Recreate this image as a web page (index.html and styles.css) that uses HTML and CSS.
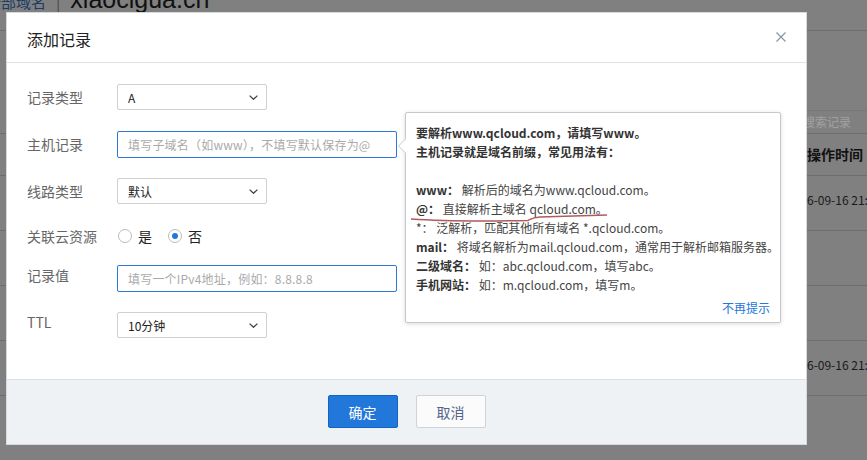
FILE: index.html
```html
<!DOCTYPE html>
<html lang="zh-CN">
<head>
    <meta charset="UTF-8">
    <meta name="viewport" content="width=device-width, initial-scale=1.0">
    <title>添加记录</title>
    <link rel="stylesheet" href="styles.css">
</head>
<body>

<div class="backdrop">
    <div class="crumb">
        <div class="crumb-inner">
            <span class="crumb-link">全部域名</span>
            <span class="crumb-sep">|</span>
            <span class="crumb-domain">xiaocigua.cn</span>
        </div>
    </div>
    <div class="page-body">
        <div class="side">
            <div class="side-label">记</div>
            <div class="side-line"></div>
            <div class="side-active">+</div>
            <div class="side-row"></div>
            <div class="side-row"></div>
            <div class="side-row"></div>
            <div class="side-row"></div>
            <div class="side-row"></div>
            <div class="side-row"></div>
        </div>
        <div class="page-main">
            <div class="search-area">
                <div class="search-box">搜索记录</div>
            </div>
            <div class="grid-head">最后操作时间</div>
            <div class="grid-row">2016-09-16 21:30:12</div>
            <div class="grid-row"></div>
            <div class="grid-row"></div>
            <div class="grid-row">2016-09-16 21:28:45</div>
        </div>
    </div>
</div>

<div class="modal">
    <div class="modal-head">
        <h3 class="modal-title">添加记录</h3>
        <span class="modal-close">
            <svg width="10" height="10" viewBox="0 0 10 10"><path d="M0.5 0.5L9.5 9.5M9.5 0.5L0.5 9.5" stroke="#8b97a8" stroke-width="1.3" fill="none"/></svg>
        </span>
    </div>

    <div class="modal-body">
        <div class="form-row">
            <label class="form-label">记录类型</label>
            <div class="select">
                <span>A</span>
                <svg width="9" height="5" viewBox="0 0 9 5"><path d="M0.6 0.6L4.5 4.3L8.4 0.6" stroke="#444" stroke-width="1.3" fill="none"/></svg>
            </div>
        </div>
        <div class="form-row">
            <label class="form-label">主机记录</label>
            <div class="input">填写子域名（如www），不填写默认保存为@</div>
        </div>
        <div class="form-row">
            <label class="form-label">线路类型</label>
            <div class="select">
                <span>默认</span>
                <svg width="9" height="5" viewBox="0 0 9 5"><path d="M0.6 0.6L4.5 4.3L8.4 0.6" stroke="#444" stroke-width="1.3" fill="none"/></svg>
            </div>
        </div>
        <div class="form-row form-row-radio">
            <label class="form-label">关联云资源</label>
            <span class="radio"></span><span class="radio-text">是</span>
            <span class="radio radio-on"></span><span class="radio-text">否</span>
        </div>
        <div class="form-row">
            <label class="form-label label-high">记录值</label>
            <div class="input">填写一个IPv4地址，例如：8.8.8.8</div>
        </div>
        <div class="form-row">
            <label class="form-label label-high">TTL</label>
            <div class="select">
                <span>10分钟</span>
                <svg width="9" height="5" viewBox="0 0 9 5"><path d="M0.6 0.6L4.5 4.3L8.4 0.6" stroke="#444" stroke-width="1.3" fill="none"/></svg>
            </div>
        </div>
    </div>

    <div class="modal-foot">
        <button class="btn btn-primary">确定</button>
        <button class="btn">取消</button>
    </div>

    <div class="tip">
        <p class="tip-strong">要解析www.qcloud.com，请填写www。</p>
        <p class="tip-strong">主机记录就是域名前缀，常见用法有：</p>
        <p>&nbsp;</p>
        <p><b>www：</b> 解析后的域名为www.qcloud.com。</p>
        <p><b>@：</b> 直接解析主域名 qcloud.com。</p>
        <p>*： 泛解析，匹配其他所有域名 *.qcloud.com。</p>
        <p><b>mail：</b> 将域名解析为mail.qcloud.com，通常用于解析邮箱服务器。</p>
        <p><b>二级域名：</b> 如：abc.qcloud.com，填写abc。</p>
        <p><b>手机网站：</b> 如：m.qcloud.com，填写m。</p>
        <a class="tip-close" href="#">不再提示</a>
        <svg class="tip-mark" width="374" height="209" viewBox="0 0 374 209"><path d="M5 106C34 108 94 108 122 107.5C125 106 126 104.5 134 104L201 102" stroke="#b05a5a" stroke-width="1.4" fill="none"/></svg>
    </div>
</div>

</body>
</html>
```

FILE: styles.css
```css
* {
    box-sizing: border-box;
}

body {
    margin: 0;
    width: 867px;
    height: 460px;
    overflow: hidden;
    position: relative;
    background: #808080;
    font-family: "Noto Sans CJK SC", sans-serif;
    color: #333;
}

/* dimmed page behind the dialog */
.backdrop {
    height: 460px;
    display: flex;
    flex-direction: column;
}

.crumb {
    height: 31px;
    border-bottom: 1px solid #6e6e6e;
    overflow: hidden;
}

.crumb-inner {
    display: flex;
    align-items: baseline;
    gap: 10px;
    margin-top: -13px;
    margin-left: -14px;
    line-height: 24px;
}

.crumb-link {
    font-size: 15px;
    color: #1b3c66;
}

.crumb-sep {
    font-size: 16px;
    color: #4a4a4a;
}

.crumb-domain {
    font-family: "Liberation Sans", sans-serif;
    font-size: 25px;
    color: #111;
}

.page-body {
    flex: 1;
    display: flex;
}

.side {
    width: 6px;
    overflow: hidden;
    display: flex;
    flex-direction: column;
}

.side-label {
    height: 43px;
    padding-top: 14px;
    margin-left: -7px;
    font-size: 14px;
    line-height: 18px;
    color: #1e3a63;
}

.side-line {
    height: 3px;
    background: #0d3f80;
    margin-bottom: 20px;
}

.side-active {
    height: 36px;
    background: #0f3a6b;
    color: #c8d2e0;
    font-size: 12px;
    line-height: 36px;
}

.side-row {
    height: 44px;
    border-bottom: 1px solid #6e6e6e;
}

.page-main {
    flex: 1;
    display: flex;
    flex-direction: column;
}

.search-area {
    height: 103px;
    border-bottom: 1px solid #6e6e6e;
    display: flex;
    align-items: flex-end;
}

.search-box {
    margin-left: 788px;
    width: 150px;
    height: 23px;
    padding-left: 14px;
    border: 1px solid #777;
    border-bottom: none;
    font-size: 12px;
    line-height: 22px;
    color: #a2a2a2;
}

.grid-head {
    height: 42px;
    border-bottom: 1px solid #6e6e6e;
    padding-left: 779px;
    font-size: 14px;
    font-weight: bold;
    line-height: 40px;
    color: #111;
    white-space: nowrap;
}

.grid-row {
    height: 55px;
    border-bottom: 1px solid #6e6e6e;
    padding-left: 787px;
    padding-top: 15px;
    font-size: 12px;
    line-height: 18px;
    color: #1a1a1a;
    white-space: nowrap;
}

/* dialog */
.modal {
    position: absolute;
    left: 6px;
    top: 12px;
    width: 801px;
    height: 433px;
    background: #fff;
    border: 1px solid #d6d9de;
    display: flex;
    flex-direction: column;
}

.modal-head {
    height: 50px;
    border-bottom: 1px solid #e1e1e1;
    padding: 2px 20px 0 20px;
    display: flex;
    align-items: center;
    justify-content: space-between;
}

.modal-title {
    margin: 0;
    font-size: 16px;
    font-weight: normal;
    color: #222;
}

.modal-close {
    display: flex;
    margin-top: -3px;
}

.modal-body {
    height: 316px;
    padding: 21px 20px 0 20px;
}

.form-row {
    display: flex;
    align-items: center;
    height: 26px;
    margin-bottom: 21px;
}

.form-row-radio {
    height: 22px;
    margin-bottom: 18px;
}

.form-label {
    width: 90px;
    font-size: 14px;
    color: #666;
}

.label-high {
    margin-top: -6px;
}

.select {
    width: 150px;
    height: 26px;
    border: 1px solid #d0d0d0;
    border-radius: 2px;
    padding: 0 8px 0 10px;
    display: flex;
    align-items: center;
    justify-content: space-between;
    font-size: 12px;
    color: #222;
}

.input {
    width: 280px;
    height: 27px;
    border: 1px solid #2a7ad6;
    border-radius: 2px;
    padding-left: 10px;
    font-size: 12px;
    line-height: 25px;
    color: #aaa;
    letter-spacing: 0.2px;
}

.radio {
    width: 14px;
    height: 14px;
    border: 1px solid #bbb;
    border-radius: 50%;
    margin-left: 1px;
    display: flex;
    align-items: center;
    justify-content: center;
}

.radio-on::after {
    content: '';
    width: 6px;
    height: 6px;
    border-radius: 50%;
    background: #2277da;
}

.radio-text {
    font-size: 14px;
    color: #222;
    margin: 0 15px 0 6px;
}

.modal-foot {
    flex: 1;
    background: #eff2f5;
    border-top: 1px solid #dcdfe3;
    display: flex;
    justify-content: center;
    gap: 18px;
    padding-top: 15px;
}

.btn {
    width: 70px;
    height: 33px;
    border: 1px solid #cfd2d6;
    border-radius: 2px;
    background: #fbfbfb;
    font-family: "Noto Sans CJK SC", sans-serif;
    font-size: 14px;
    color: #50648c;
}

.btn-primary {
    background: #2277da;
    border-color: #0f64c4;
    color: #fff;
}

/* help tooltip next to 主机记录 */
.tip {
    position: absolute;
    left: 398px;
    top: 99px;
    width: 376px;
    height: 211px;
    border: 1px solid #c5c8cd;
    border-radius: 2px;
    background: #fff;
    box-shadow: 0 1px 4px rgba(0, 0, 0, 0.15);
    padding: 10px 10px 0 10px;
    font-size: 12px;
    line-height: 19px;
    color: #444;
}

.tip::before,
.tip::after {
    content: '';
    position: absolute;
    top: 26px;
    border: 7px solid transparent;
    border-left: none;
}

.tip::before {
    left: -8px;
    border-right: 7px solid #c5c8cd;
}

.tip::after {
    left: -7px;
    border-right: 7px solid #fff;
}

.tip p {
    margin: 0;
    white-space: nowrap;
}

.tip b,
.tip-strong {
    font-weight: bold;
    color: #333;
}

.tip-close {
    display: block;
    margin-top: 4px;
    text-align: right;
    color: #2277da;
    text-decoration: none;
}

.tip-mark {
    position: absolute;
    left: 0;
    top: 0;
    pointer-events: none;
}
```
